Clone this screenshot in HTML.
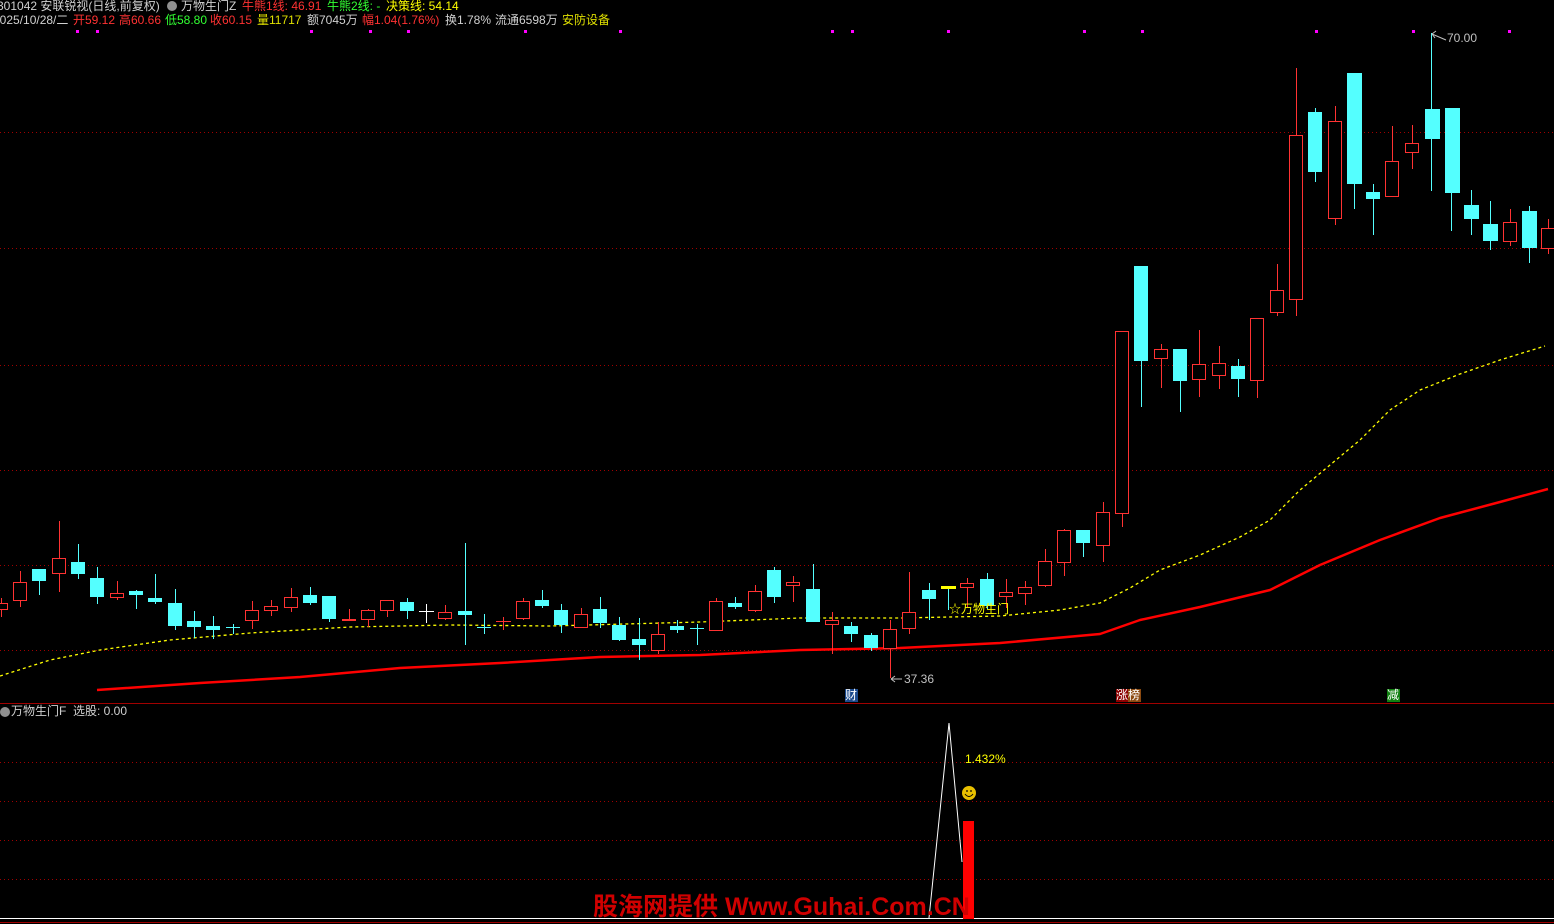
<!DOCTYPE html>
<html><head><meta charset="utf-8">
<style>
html,body{margin:0;padding:0;background:#000;}
body{width:1554px;height:924px;position:relative;overflow:hidden;font-family:"Liberation Sans","Noto Sans CJK SC",sans-serif;font-size:12px;}
.t{position:absolute;white-space:nowrap;line-height:13px;}
svg{position:absolute;left:0;top:0;}
.r line,.r rect{stroke:#ff3232;stroke-width:1;fill:#000;}
.c line{stroke:#54ffff;stroke-width:1;}
.c rect{fill:#54ffff;}
</style></head><body>
<svg width="1554" height="924" shape-rendering="crispEdges">
<g stroke="#a00000" stroke-dasharray="1 3" stroke-width="1">
<line x1="0" y1="132.5" x2="1554" y2="132.5"/><line x1="0" y1="248.5" x2="1554" y2="248.5"/><line x1="0" y1="365.5" x2="1554" y2="365.5"/><line x1="0" y1="470.5" x2="1554" y2="470.5"/><line x1="0" y1="565.5" x2="1554" y2="565.5"/><line x1="0" y1="650.5" x2="1554" y2="650.5"/>
<line x1="0" y1="762.5" x2="1554" y2="762.5"/><line x1="0" y1="801.5" x2="1554" y2="801.5"/><line x1="0" y1="840.5" x2="1554" y2="840.5"/><line x1="0" y1="879.5" x2="1554" y2="879.5"/>
</g>
<line x1="0" y1="703.5" x2="1554" y2="703.5" stroke="#a00000"/>
<line x1="0" y1="922.5" x2="1554" y2="922.5" stroke="#a00000"/>
<g fill="#ff00ff">
<rect x="76" y="30" width="3" height="3"/><rect x="96" y="30" width="3" height="3"/><rect x="310" y="30" width="3" height="3"/><rect x="369" y="30" width="3" height="3"/><rect x="407" y="30" width="3" height="3"/><rect x="524" y="30" width="3" height="3"/><rect x="619" y="30" width="3" height="3"/><rect x="831" y="30" width="3" height="3"/><rect x="851" y="30" width="3" height="3"/><rect x="947" y="30" width="3" height="3"/><rect x="1083" y="30" width="3" height="3"/><rect x="1141" y="30" width="3" height="3"/><rect x="1315" y="30" width="3" height="3"/><rect x="1412" y="30" width="3" height="3"/><rect x="1508" y="30" width="3" height="3"/>
</g>
<polyline fill="none" stroke="#ffff00" stroke-width="1.3" stroke-dasharray="3 3" stroke-linejoin="round" shape-rendering="auto" points="0,676 50,660 100,650 170,640 250,633 350,627 450,625 550,626 700,622 800,618 900,618 1000,616 1060,610 1100,603 1130,588 1160,570 1200,555 1240,537 1270,520 1300,490 1330,465 1360,440 1390,410 1420,390 1460,374 1500,360 1545,346"/>
<polyline fill="none" stroke="#ff0000" stroke-width="2.5" stroke-linejoin="round" shape-rendering="auto" points="97,690 200,683 300,677 400,668 500,663 600,657 700,655 800,650 900,648 1000,643 1100,634 1140,620 1200,607 1270,590 1320,565 1380,540 1440,518 1500,502 1548,489"/>
<g class="r"><line x1="1.5" y1="598" x2="1.5" y2="617"/><rect x="-5.5" y="603.5" width="13" height="6"/></g>
<g class="r"><line x1="20.5" y1="571" x2="20.5" y2="607"/><rect x="13.5" y="582.5" width="13" height="18"/></g>
<g class="c"><line x1="39.5" y1="569" x2="39.5" y2="595"/><rect x="32" y="569" width="14" height="12"/></g>
<g class="r"><line x1="59.5" y1="521" x2="59.5" y2="592"/><rect x="52.5" y="558.5" width="13" height="15"/></g>
<g class="c"><line x1="78.5" y1="544" x2="78.5" y2="579"/><rect x="71" y="562" width="14" height="12"/></g>
<g class="c"><line x1="97.5" y1="567" x2="97.5" y2="604"/><rect x="90" y="578" width="14" height="19"/></g>
<g class="r"><line x1="117.5" y1="581" x2="117.5" y2="600"/><rect x="110.5" y="593.5" width="13" height="4"/></g>
<g class="c"><line x1="136.5" y1="590" x2="136.5" y2="609"/><rect x="129" y="591" width="14" height="4"/></g>
<g class="c"><line x1="155.5" y1="574" x2="155.5" y2="604"/><rect x="148" y="598" width="14" height="4"/></g>
<g class="c"><line x1="175.5" y1="589" x2="175.5" y2="630"/><rect x="168" y="603" width="14" height="23"/></g>
<g class="c"><line x1="194.5" y1="611" x2="194.5" y2="638"/><rect x="187" y="621" width="14" height="6"/></g>
<g class="c"><line x1="213.5" y1="616" x2="213.5" y2="639"/><rect x="206" y="626" width="14" height="4"/></g>
<g class="c"><line x1="233.5" y1="624" x2="233.5" y2="634"/><rect x="226" y="627" width="14" height="1"/></g>
<g class="r"><line x1="252.5" y1="601" x2="252.5" y2="629"/><rect x="245.5" y="610.5" width="13" height="10"/></g>
<g class="r"><line x1="271.5" y1="600" x2="271.5" y2="616"/><rect x="264.5" y="606.5" width="13" height="4"/></g>
<g class="r"><line x1="291.5" y1="588" x2="291.5" y2="612"/><rect x="284.5" y="597.5" width="13" height="10"/></g>
<g class="c"><line x1="310.5" y1="587" x2="310.5" y2="605"/><rect x="303" y="595" width="14" height="8"/></g>
<g class="c"><line x1="329.5" y1="596" x2="329.5" y2="622"/><rect x="322" y="596" width="14" height="23"/></g>
<g class="r"><line x1="349.5" y1="609" x2="349.5" y2="621"/><rect x="342.5" y="619.5" width="13" height="1"/></g>
<g class="r"><line x1="368.5" y1="609" x2="368.5" y2="627"/><rect x="361.5" y="610.5" width="13" height="9"/></g>
<g class="r"><line x1="387.5" y1="600" x2="387.5" y2="617"/><rect x="380.5" y="600.5" width="13" height="10"/></g>
<g class="c"><line x1="407.5" y1="598" x2="407.5" y2="619"/><rect x="400" y="602" width="14" height="9"/></g>
<g stroke="#fff"><line x1="426.5" y1="604" x2="426.5" y2="623"/><line x1="419" y1="611.5" x2="434" y2="611.5"/></g>
<g class="r"><line x1="445.5" y1="605" x2="445.5" y2="620"/><rect x="438.5" y="612.5" width="13" height="6"/></g>
<g class="c"><line x1="465.5" y1="543" x2="465.5" y2="645"/><rect x="458" y="611" width="14" height="4"/></g>
<g class="c"><line x1="484.5" y1="614" x2="484.5" y2="634"/><rect x="477" y="627" width="14" height="1"/></g>
<g stroke="#ff3232"><line x1="503.5" y1="617" x2="503.5" y2="630"/><line x1="496" y1="621.5" x2="511" y2="621.5"/></g>
<g class="r"><line x1="523.5" y1="598" x2="523.5" y2="620"/><rect x="516.5" y="601.5" width="13" height="17"/></g>
<g class="c"><line x1="542.5" y1="590" x2="542.5" y2="608"/><rect x="535" y="600" width="14" height="6"/></g>
<g class="c"><line x1="561.5" y1="604" x2="561.5" y2="633"/><rect x="554" y="610" width="14" height="15"/></g>
<g class="r"><line x1="581.5" y1="608" x2="581.5" y2="628"/><rect x="574.5" y="614.5" width="13" height="13"/></g>
<g class="c"><line x1="600.5" y1="597" x2="600.5" y2="628"/><rect x="593" y="609" width="14" height="14"/></g>
<g class="c"><line x1="619.5" y1="617" x2="619.5" y2="641"/><rect x="612" y="625" width="14" height="15"/></g>
<g class="c"><line x1="639.5" y1="618" x2="639.5" y2="660"/><rect x="632" y="639" width="14" height="6"/></g>
<g class="r"><line x1="658.5" y1="622" x2="658.5" y2="654"/><rect x="651.5" y="634.5" width="13" height="16"/></g>
<g class="c"><line x1="677.5" y1="620" x2="677.5" y2="633"/><rect x="670" y="626" width="14" height="4"/></g>
<g class="c"><line x1="697.5" y1="624" x2="697.5" y2="645"/><rect x="690" y="628" width="14" height="1"/></g>
<g class="r"><line x1="716.5" y1="598" x2="716.5" y2="631"/><rect x="709.5" y="601.5" width="13" height="29"/></g>
<g class="c"><line x1="735.5" y1="597" x2="735.5" y2="609"/><rect x="728" y="603" width="14" height="4"/></g>
<g class="r"><line x1="755.5" y1="585" x2="755.5" y2="612"/><rect x="748.5" y="591.5" width="13" height="19"/></g>
<g class="c"><line x1="774.5" y1="567" x2="774.5" y2="603"/><rect x="767" y="570" width="14" height="27"/></g>
<g class="r"><line x1="793.5" y1="576" x2="793.5" y2="602"/><rect x="786.5" y="582.5" width="13" height="3"/></g>
<g class="c"><line x1="813.5" y1="564" x2="813.5" y2="622"/><rect x="806" y="589" width="14" height="33"/></g>
<g class="r"><line x1="832.5" y1="612" x2="832.5" y2="654"/><rect x="825.5" y="620.5" width="13" height="4"/></g>
<g class="c"><line x1="851.5" y1="622" x2="851.5" y2="642"/><rect x="844" y="626" width="14" height="8"/></g>
<g class="c"><line x1="871.5" y1="633" x2="871.5" y2="651"/><rect x="864" y="635" width="14" height="13"/></g>
<g class="r"><line x1="890.5" y1="620" x2="890.5" y2="678"/><rect x="883.5" y="629.5" width="13" height="19"/></g>
<g class="r"><line x1="909.5" y1="572" x2="909.5" y2="634"/><rect x="902.5" y="612.5" width="13" height="16"/></g>
<g class="c"><line x1="929.5" y1="583" x2="929.5" y2="620"/><rect x="922" y="590" width="14" height="9"/></g>
<g><line x1="948.5" y1="587" x2="948.5" y2="610" stroke="#54ffff"/><rect x="941" y="586" width="15" height="3" fill="#ffff00"/></g>
<g class="r"><line x1="967.5" y1="578" x2="967.5" y2="608"/><rect x="960.5" y="583.5" width="13" height="4"/></g>
<g class="c"><line x1="987.5" y1="573" x2="987.5" y2="609"/><rect x="980" y="579" width="14" height="27"/></g>
<g class="r"><line x1="1006.5" y1="579" x2="1006.5" y2="608"/><rect x="999.5" y="592.5" width="13" height="4"/></g>
<g class="r"><line x1="1025.5" y1="581" x2="1025.5" y2="605"/><rect x="1018.5" y="587.5" width="13" height="6"/></g>
<g class="r"><line x1="1045.5" y1="549" x2="1045.5" y2="587"/><rect x="1038.5" y="561.5" width="13" height="24"/></g>
<g class="r"><line x1="1064.5" y1="529" x2="1064.5" y2="576"/><rect x="1057.5" y="530.5" width="13" height="32"/></g>
<g class="c"><line x1="1083.5" y1="530" x2="1083.5" y2="557"/><rect x="1076" y="530" width="14" height="13"/></g>
<g class="r"><line x1="1103.5" y1="502" x2="1103.5" y2="562"/><rect x="1096.5" y="512.5" width="13" height="33"/></g>
<g class="r"><line x1="1122.5" y1="331" x2="1122.5" y2="527"/><rect x="1115.5" y="331.5" width="13" height="182"/></g>
<g class="c"><line x1="1141.5" y1="266" x2="1141.5" y2="407"/><rect x="1134" y="266" width="14" height="95"/></g>
<g class="r"><line x1="1161.5" y1="344" x2="1161.5" y2="388"/><rect x="1154.5" y="349.5" width="13" height="9"/></g>
<g class="c"><line x1="1180.5" y1="349" x2="1180.5" y2="412"/><rect x="1173" y="349" width="14" height="32"/></g>
<g class="r"><line x1="1199.5" y1="330" x2="1199.5" y2="397"/><rect x="1192.5" y="364.5" width="13" height="15"/></g>
<g class="r"><line x1="1219.5" y1="346" x2="1219.5" y2="389"/><rect x="1212.5" y="363.5" width="13" height="12"/></g>
<g class="c"><line x1="1238.5" y1="359" x2="1238.5" y2="397"/><rect x="1231" y="366" width="14" height="13"/></g>
<g class="r"><line x1="1257.5" y1="318" x2="1257.5" y2="398"/><rect x="1250.5" y="318.5" width="13" height="62"/></g>
<g class="r"><line x1="1277.5" y1="264" x2="1277.5" y2="316"/><rect x="1270.5" y="290.5" width="13" height="22"/></g>
<g class="r"><line x1="1296.5" y1="68" x2="1296.5" y2="316"/><rect x="1289.5" y="135.5" width="13" height="164"/></g>
<g class="c"><line x1="1315.5" y1="108" x2="1315.5" y2="182"/><rect x="1308" y="112" width="14" height="60"/></g>
<g class="r"><line x1="1335.5" y1="106" x2="1335.5" y2="225"/><rect x="1328.5" y="121.5" width="13" height="97"/></g>
<g class="c"><line x1="1354.5" y1="73" x2="1354.5" y2="209"/><rect x="1347" y="73" width="15" height="111"/></g>
<g class="c"><line x1="1373.5" y1="184" x2="1373.5" y2="235"/><rect x="1366" y="192" width="14" height="7"/></g>
<g class="r"><line x1="1392.5" y1="126" x2="1392.5" y2="196"/><rect x="1385.5" y="161.5" width="13" height="35"/></g>
<g class="r"><line x1="1412.5" y1="125" x2="1412.5" y2="169"/><rect x="1405.5" y="143.5" width="13" height="9"/></g>
<g class="c"><line x1="1431.5" y1="33" x2="1431.5" y2="191"/><rect x="1425" y="109" width="15" height="30"/></g>
<g class="c"><line x1="1451.5" y1="108" x2="1451.5" y2="231"/><rect x="1445" y="108" width="15" height="85"/></g>
<g class="c"><line x1="1471.5" y1="190" x2="1471.5" y2="235"/><rect x="1464" y="205" width="15" height="14"/></g>
<g class="c"><line x1="1490.5" y1="201" x2="1490.5" y2="250"/><rect x="1483" y="224" width="15" height="17"/></g>
<g class="r"><line x1="1510.5" y1="209" x2="1510.5" y2="246"/><rect x="1503.5" y="222.5" width="13" height="19"/></g>
<g class="c"><line x1="1529.5" y1="206" x2="1529.5" y2="263"/><rect x="1522" y="211" width="15" height="37"/></g>
<g class="r"><line x1="1548.5" y1="219" x2="1548.5" y2="254"/><rect x="1541.5" y="228.5" width="14" height="20"/></g>
<g stroke="#c0c0c0" fill="none" shape-rendering="auto"><path d="M1432 34 L1446 40 M1432 34 L1436 31 M1432 34 L1435 38"/><path d="M891 679 L902 679 M891 679 L895 676 M891 679 L895 682"/></g>
<rect x="845" y="689" width="13" height="13" fill="#1c4a8c"/>
<rect x="1116" y="689" width="12" height="13" fill="#8c0000"/>
<rect x="1128" y="689" width="13" height="13" fill="#8c4a10"/>
<rect x="1387" y="689" width="13" height="13" fill="#108010"/>
<line x1="0" y1="918.5" x2="1554" y2="918.5" stroke="#fff"/>
<polyline fill="none" stroke="#fff" stroke-width="1" shape-rendering="auto" points="929,918 949,723 962,862"/>
<rect x="963" y="821" width="11" height="98" fill="#ff0000"/>
<circle cx="969" cy="793" r="7" fill="#e8c000" shape-rendering="auto"/>
<circle cx="967" cy="791" r="0.9" fill="#000" shape-rendering="auto"/><circle cx="971" cy="791" r="0.9" fill="#000" shape-rendering="auto"/>
<path d="M965 794 Q969 799 973 794" stroke="#000" fill="none" shape-rendering="auto"/>
<circle cx="5" cy="712" r="5" fill="#909090" shape-rendering="auto"/>
<circle cx="172" cy="6" r="5" fill="#909090" shape-rendering="auto"/>
</svg>
<div class="t" style="left:-3px;top:0;color:#d0d0d0">301042 安联锐视(日线,前复权)</div>
<div class="t" style="left:181px;top:0;color:#d0d0d0">万物生门Z</div>
<div class="t" style="left:242px;top:0;color:#ff3232">牛熊1线: 46.91</div>
<div class="t" style="left:327px;top:0;color:#32ff32">牛熊2线: -</div>
<div class="t" style="left:386px;top:0;color:#ffff00">决策线: 54.14</div>
<div class="t" style="left:-7px;top:14px;color:#d0d0d0">2025/10/28/二</div>
<div class="t" style="left:73px;top:14px;color:#ff3232">开59.12</div>
<div class="t" style="left:119px;top:14px;color:#ff3232">高60.66</div>
<div class="t" style="left:165px;top:14px;color:#32ff32">低58.80</div>
<div class="t" style="left:210px;top:14px;color:#ff3232">收60.15</div>
<div class="t" style="left:257px;top:14px;color:#e0e000">量11717</div>
<div class="t" style="left:307px;top:14px;color:#d0d0d0">额7045万</div>
<div class="t" style="left:362px;top:14px;color:#ff3232">幅1.04(1.76%)</div>
<div class="t" style="left:445px;top:14px;color:#d0d0d0">换1.78%</div>
<div class="t" style="left:495px;top:14px;color:#d0d0d0">流通6598万</div>
<div class="t" style="left:562px;top:14px;color:#e0e000">安防设备</div>
<div class="t" style="left:1447px;top:32px;color:#c0c0c0">70.00</div>
<div class="t" style="left:904px;top:673px;color:#c0c0c0">37.36</div>
<div class="t" style="left:949px;top:603px;color:#ffff00">☆万物生门</div>
<div class="t" style="left:845px;top:689px;color:#fff">财</div>
<div class="t" style="left:1116px;top:689px;color:#fff">涨榜</div>
<div class="t" style="left:1387px;top:689px;color:#fff">减</div>
<div class="t" style="left:11px;top:705px;color:#d0d0d0">万物生门F &nbsp;选股: 0.00</div>
<div class="t" style="left:965px;top:753px;color:#ffff00">1.432%</div>
<div class="t" style="left:593px;top:893px;color:#d00000;font-size:25px;font-weight:bold;line-height:28px">股海网提供 Www.Guhai.Com.CN</div>
</body></html>
